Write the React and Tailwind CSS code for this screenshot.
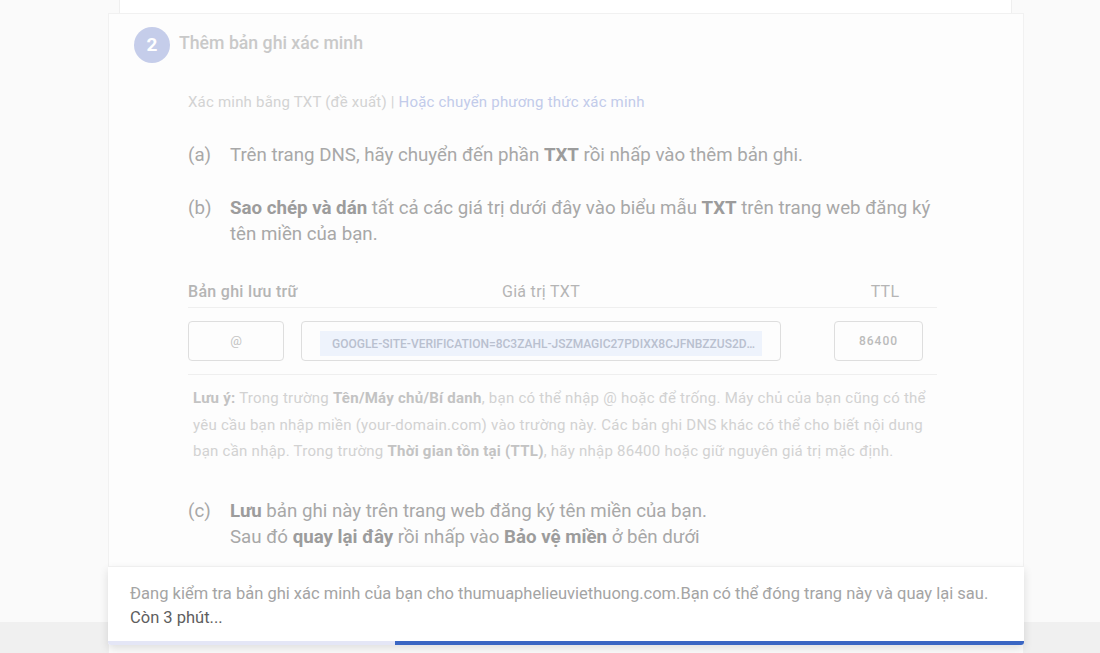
import React from "react";

export default function App() {
  return (
    <div
      className="w-[1100px] h-[653px] overflow-hidden bg-[#fafafa] flex flex-col"
      style={{ fontFamily: "Roboto, 'Noto Sans', Arial, sans-serif" }}
    >
      <div className="h-[622px] relative z-10">
        {/* previous card bottom */}
        <div className="ml-[119px] w-[893px] h-[13px] bg-white border-x border-[#efefef]" />
        {/* main card */}
        <div className="ml-[108px] w-[916px] h-[700px] bg-[#fdfdfd] border border-[#f1f1f1] pt-[13px] pl-[25px]">
          <div className="flex items-center gap-[9px]">
            <div className="w-9 h-9 rounded-full bg-[#c5cdea] flex items-center justify-center text-white text-[19px] font-bold">
              2
            </div>
            <div className="text-[17.7px] font-medium text-[#c9c9c9] -mt-[3px]">Thêm bản ghi xác minh</div>
          </div>

          <div className="ml-[54px] w-[780px]">
            <div className="mt-[29px] text-[15px] tracking-[0.2px] leading-[20px] text-[#d3d3d3]">
              Xác minh bằng TXT (đề xuất) | <span className="text-[#c2cbea]">Hoặc chuyển phương thức xác minh</span>
            </div>

            <div className="mt-[30px] flex text-[18.7px] leading-[26px] text-[#a8a8a8]">
              <div className="w-[42px] shrink-0">(a)</div>
              <div>
                Trên trang DNS, hãy chuyển đến phần <b className="font-bold text-[#9c9c9c]">TXT</b> rồi nhấp vào thêm bản ghi.
              </div>
            </div>

            <div className="mt-[27px] flex text-[18.7px] leading-[26px] text-[#a8a8a8]">
              <div className="w-[42px] shrink-0">(b)</div>
              <div className="w-[712px]">
                <b className="font-bold text-[#9c9c9c]">Sao chép và dán</b> tất cả các giá trị dưới đây vào biểu mẫu{" "}
                <b className="font-bold text-[#9c9c9c]">TXT</b> trên trang web đăng ký tên miền của bạn.
              </div>
            </div>

            {/* table */}
            <div className="mt-[34px] w-[749px]">
              <div className="flex border-b border-[#efefef] pb-[4px] text-[16px] tracking-[0.3px] leading-[22px] text-[#b5b5b5] whitespace-nowrap">
                <div className="w-[113px] font-medium">Bản ghi lưu trữ</div>
                <div className="w-[480px] text-center">Giá trị TXT</div>
                <div className="w-[156px] pl-[52px] text-center">TTL</div>
              </div>
              <div className="pt-[13px] pb-[13px] border-b border-[#efefef] flex">
                <div className="w-[96px] h-[40px] rounded-[4px] border border-[#dedede] flex items-center justify-center text-[13px] text-[#c4c4c4]">
                  @
                </div>
                <div className="ml-[17px] w-[480px] h-[40px] rounded-[4px] border border-[#dedede] pl-[18px] pt-[9px]">
                  <div className="w-[442px] h-[25px] bg-[#eef3fc] pl-[12px] pr-[3px] flex items-center">
                    <span className="truncate text-[12px] font-medium text-[#b9c0cf]">
                      GOOGLE-SITE-VERIFICATION=8C3ZAHL-JSZMAGIC27PDIXX8CJFNBZZUS2DXQ4H7WLKM
                    </span>
                  </div>
                </div>
                <div className="ml-[53px] w-[89px] h-[40px] rounded-[4px] border border-[#dedede] flex items-center justify-center text-[12px] tracking-[1px] font-medium text-[#bbbbbb]">
                  86400
                </div>
              </div>
              <div className="mt-[10px] pl-[5px] text-[15px] tracking-[0.25px] leading-[26.5px] text-[#d2d2d2]">
                <b className="font-bold text-[#c3c3c3]">Lưu ý:</b> Trong trường{" "}
                <b className="font-bold text-[#c3c3c3]">Tên/Máy chủ/Bí danh</b>, bạn có thể nhập @ hoặc để trống. Máy chủ
                của bạn cũng có thể yêu cầu bạn nhập miền (your-domain.com) vào trường này. Các bản ghi DNS khác có thể cho
                biết nội dung bạn cần nhập. Trong trường{" "}
                <b className="font-bold text-[#c3c3c3]">Thời gian tồn tại (TTL)</b>, hãy nhập 86400 hoặc giữ nguyên giá trị
                mặc định.
              </div>
            </div>

            <div className="mt-[33px] flex text-[18.7px] leading-[26px] text-[#a8a8a8]">
              <div className="w-[42px] shrink-0">(c)</div>
              <div>
                <b className="font-bold text-[#9c9c9c]">Lưu</b> bản ghi này trên trang web đăng ký tên miền của bạn.
                <br />
                Sau đó <b className="font-bold text-[#9c9c9c]">quay lại đây</b> rồi nhấp vào{" "}
                <b className="font-bold text-[#9c9c9c]">Bảo vệ miền</b> ở bên dưới
              </div>
            </div>
          </div>
        </div>

        {/* toast overlay */}
        <div className="absolute left-[108px] top-[566px] w-[916px] h-[79px] bg-white border-t border-[#efefef] shadow-[0_4px_10px_rgba(0,0,0,0.12)] rounded-b-[3px] overflow-hidden flex flex-col">
          <div className="flex-1 pl-[22px] pt-[15px] text-[16.5px] leading-[24px]">
            <div className="text-[#a4a4a4] whitespace-nowrap">
              Đang kiểm tra bản ghi xác minh của bạn cho thumuaphelieuviethuong.com.Bạn có thể đóng trang này và quay lại sau.
            </div>
            <div className="text-[#5e5e5e]">Còn 3 phút...</div>
          </div>
          <div className="h-[4px] flex">
            <div className="w-[287px] bg-[#e4e6f6]" />
            <div className="flex-1 bg-[#3a66c3]" />
          </div>
        </div>
      </div>
      <div className="h-[31px] bg-[#f0f0f0]" />
    </div>
  );
}
